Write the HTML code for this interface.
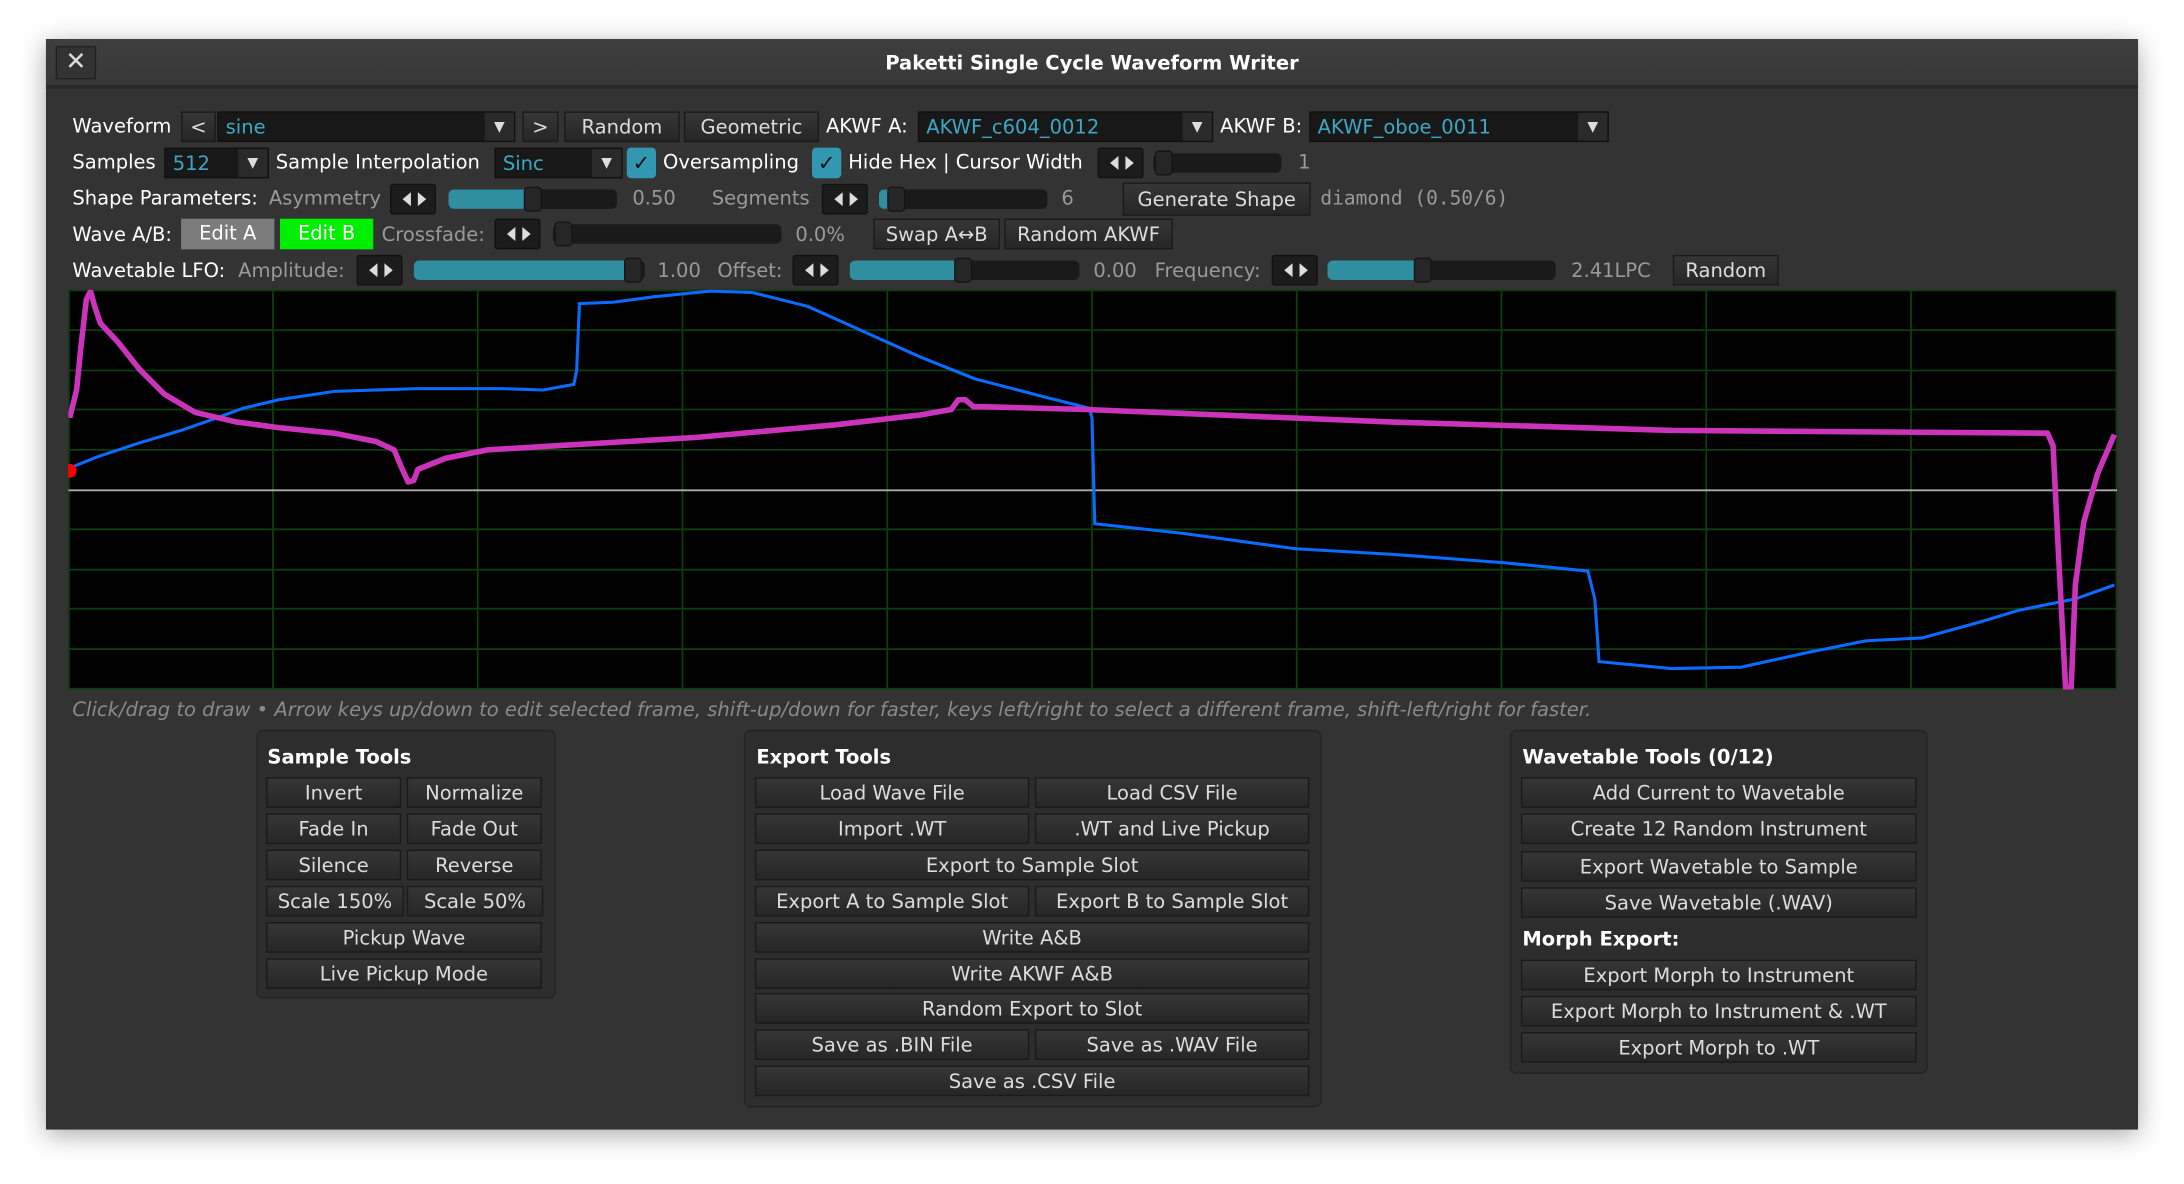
<!DOCTYPE html>
<html><head><meta charset="utf-8">
<style>
html,body{margin:0;padding:0;width:2184px;height:1184px;overflow:hidden;background:#fff;}
#s{position:absolute;left:0;top:0;width:1568px;height:850px;transform:scale(1.392857);transform-origin:0 0;font-family:"DejaVu Sans","Liberation Sans",sans-serif;font-size:14px;color:#e6e6e6;}
.a{position:absolute;white-space:nowrap;margin-top:1px;}
#win{position:absolute;left:33px;top:28px;width:1502px;height:783px;background:#333;box-shadow:0 4px 18px rgba(0,0,0,.35);}
#tb{position:absolute;left:0;top:0;width:1502px;height:33px;background:linear-gradient(#3e3e3e,#383838);border-bottom:3px solid #2a2a2a;}
.b{position:absolute;line-height:22px;text-align:center;background:linear-gradient(#363636,#262626);border:1px solid #1a1a1a;color:#dcdcdc;box-sizing:border-box;height:22px;}
.dd{position:absolute;height:22px;line-height:22px;background:#181818;border:1px solid #111;box-sizing:border-box;color:#3ba9c6;padding-left:5px;}
.dd i{position:absolute;right:0;top:0;width:21px;height:20px;background:#2a2a2a;color:#ddd;font-style:normal;font-size:10px;text-align:center;}
.ar{position:absolute;height:22px;width:33px;background:#1c1c1c;border:1px solid #111;box-sizing:border-box;border-radius:2px;}
.ar:before{content:"";position:absolute;left:8px;top:5px;border-right:6px solid #ddd;border-top:5px solid transparent;border-bottom:5px solid transparent;}
.ar:after{content:"";position:absolute;left:19px;top:5px;border-left:6px solid #ddd;border-top:5px solid transparent;border-bottom:5px solid transparent;}
.sl{position:absolute;height:14px;background:#1a1a1a;border-radius:4px;overflow:hidden;}
.sl b{position:absolute;left:0;top:0;height:14px;background:#2f8ea0;}
.th{position:absolute;width:13px;height:18px;background:#262626;border:1px solid #151515;border-radius:3px;box-sizing:border-box;}
.g{color:#9a9a9a;}
.cb{position:absolute;width:21px;height:22px;background:#3297b1;border-radius:3px;color:#111;text-align:center;line-height:22px;font-size:15px;font-weight:bold;}
.pn{position:absolute;background:#2d2d2d;border:1px solid #232323;border-radius:5px;box-sizing:border-box;}
.h{position:absolute;font-weight:bold;color:#fff;margin-top:1px;}
</style></head><body>
<div id="s">
<div id="win">
 <div id="tb">
  <div class="a" style="left:7px;top:4px;width:27px;height:22px;border:1px solid #222;background:#333;text-align:center;line-height:22px;font-size:18px;color:#ddd;">✕</div>
  <div class="a" style="left:0;width:1502px;top:9px;text-align:center;font-weight:bold;color:#fff;font-size:14px;">Paketti Single Cycle Waveform Writer</div>
 </div>
</div>

<!-- Row1 -->
<div class="a" style="left:52px;top:82px;color:#fff">Waveform</div>
<div class="b" style="left:130px;top:80px;width:25px;">&lt;</div>
<div class="dd" style="left:156px;top:80px;width:214px;">sine<i>▼</i></div>
<div class="b" style="left:375px;top:80px;width:26px;">&gt;</div>
<div class="b" style="left:405px;top:80px;width:83px;">Random</div>
<div class="b" style="left:491px;top:80px;width:97px;">Geometric</div>
<div class="a" style="left:593px;top:82px;color:#fff">AKWF A:</div>
<div class="dd" style="left:659px;top:80px;width:212px;">AKWF_c604_0012<i>▼</i></div>
<div class="a" style="left:876px;top:82px;color:#fff">AKWF B:</div>
<div class="dd" style="left:940px;top:80px;width:215px;">AKWF_oboe_0011<i>▼</i></div>
<!-- Row2 -->
<div class="a" style="left:52px;top:108px;color:#fff">Samples</div>
<div class="dd" style="left:118px;top:106px;width:75px;">512<i>▼</i></div>
<div class="a" style="left:198px;top:108px;color:#fff">Sample Interpolation</div>
<div class="dd" style="left:355px;top:106px;width:92px;">Sinc<i>▼</i></div>
<div class="cb" style="left:450px;top:106px;">✓</div>
<div class="a" style="left:476px;top:108px;color:#fff">Oversampling</div>
<div class="cb" style="left:583px;top:106px;">✓</div>
<div class="a" style="left:609px;top:108px;color:#fff">Hide Hex | Cursor Width</div>
<div class="ar" style="left:788px;top:106px;"></div>
<div class="sl" style="left:828px;top:110px;width:92px;"></div><div class="th" style="left:829px;top:108px;"></div>
<div class="a g" style="left:932px;top:108px;">1</div>
<!-- Row3 -->
<div class="a" style="left:52px;top:134px;color:#fff">Shape Parameters:</div>
<div class="a g" style="left:193px;top:134px;">Asymmetry</div>
<div class="ar" style="left:280px;top:132px;"></div>
<div class="sl" style="left:322px;top:136px;width:121px;"><b style="width:62px"></b></div><div class="th" style="left:376px;top:134px;"></div>
<div class="a g" style="left:454px;top:134px;">0.50</div>
<div class="a g" style="left:511px;top:134px;">Segments</div>
<div class="ar" style="left:590px;top:132px;"></div>
<div class="sl" style="left:631px;top:136px;width:121px;"><b style="width:8px"></b></div><div class="th" style="left:637px;top:134px;"></div>
<div class="a g" style="left:762px;top:134px;">6</div>
<div class="b" style="left:806px;top:131px;width:135px;height:24px;line-height:24px;">Generate Shape</div>
<div class="a g" style="left:948px;top:134px;font-family:'DejaVu Sans Mono','Liberation Mono',monospace;font-size:14px;">diamond (0.50/6)</div>
<!-- Row4 -->
<div class="a" style="left:52px;top:160px;color:#fff">Wave A/B:</div>
<div class="a" style="left:130px;top:157px;width:67px;height:22px;line-height:22px;background:#7c7c7c;text-align:center;color:#fff;margin-top:0;">Edit A</div>
<div class="a" style="left:201px;top:157px;width:67px;height:22px;line-height:22px;background:#00ee00;text-align:center;color:#fff;margin-top:0;">Edit B</div>
<div class="a g" style="left:274px;top:160px;">Crossfade:</div>
<div class="ar" style="left:355px;top:157px;"></div>
<div class="sl" style="left:397px;top:161px;width:164px;"></div><div class="th" style="left:398px;top:159px;"></div>
<div class="a g" style="left:571px;top:160px;">0.0%</div>
<div class="b" style="left:627px;top:157px;width:91px;">Swap A↔B</div>
<div class="b" style="left:721px;top:157px;width:121px;">Random AKWF</div>
<!-- Row5 -->
<div class="a" style="left:52px;top:186px;color:#fff">Wavetable LFO:</div>
<div class="a g" style="left:171px;top:186px;">Amplitude:</div>
<div class="ar" style="left:256px;top:183px;"></div>
<div class="sl" style="left:297px;top:187px;width:166px;"><b style="width:158px"></b></div><div class="th" style="left:448px;top:185px;"></div>
<div class="a g" style="left:472px;top:186px;">1.00</div>
<div class="a g" style="left:515px;top:186px;">Offset:</div>
<div class="ar" style="left:569px;top:183px;"></div>
<div class="sl" style="left:610px;top:187px;width:165px;"><b style="width:82px"></b></div><div class="th" style="left:685px;top:185px;"></div>
<div class="a g" style="left:785px;top:186px;">0.00</div>
<div class="a g" style="left:829px;top:186px;">Frequency:</div>
<div class="ar" style="left:913px;top:183px;"></div>
<div class="sl" style="left:953px;top:187px;width:164px;"><b style="width:68px"></b></div><div class="th" style="left:1015px;top:185px;"></div>
<div class="a g" style="left:1128px;top:186px;">2.41LPC</div>
<div class="b" style="left:1201px;top:183px;width:76px;">Random</div>

<!-- Plot -->
<svg class="a" style="left:49px;top:208px;margin-top:0" width="1471" height="287" viewBox="49 208 1471 287">
<rect x="49" y="208" width="1471" height="287" fill="#000"/>
<g stroke="#0c3d0c" stroke-width="1.3">
<line x1="196" y1="208" x2="196" y2="495"/><line x1="343" y1="208" x2="343" y2="495"/><line x1="490" y1="208" x2="490" y2="495"/><line x1="637" y1="208" x2="637" y2="495"/><line x1="784" y1="208" x2="784" y2="495"/><line x1="931" y1="208" x2="931" y2="495"/><line x1="1078" y1="208" x2="1078" y2="495"/><line x1="1225" y1="208" x2="1225" y2="495"/><line x1="1372" y1="208" x2="1372" y2="495"/>
<line x1="49" y1="237" x2="1520" y2="237"/><line x1="49" y1="266" x2="1520" y2="266"/><line x1="49" y1="294" x2="1520" y2="294"/><line x1="49" y1="323" x2="1520" y2="323"/><line x1="49" y1="380" x2="1520" y2="380"/><line x1="49" y1="409" x2="1520" y2="409"/><line x1="49" y1="437" x2="1520" y2="437"/><line x1="49" y1="466" x2="1520" y2="466"/>
<rect x="49.5" y="208.5" width="1470" height="286" fill="none"/>
</g>
<line x1="49" y1="352" x2="1520" y2="352" stroke="#aaa" stroke-width="1.3"/>
<polyline fill="none" stroke="#0a6cff" stroke-width="2.2" points="50,336 70,328 100,318 130,309 150,302 175,293 200,287 240,281 300,279 360,279 390,280 412,276 414,266 416,218 440,217 470,213 510,209 540,210 580,220 620,238 660,256 700,272 750,285 782,293 784,300 786,376 850,383 930,394 1000,398 1080,404 1140,410 1145,430 1148,475 1200,480 1250,479 1300,468 1340,460 1380,458 1420,447 1450,438 1490,430 1518,420"/>
<polyline fill="none" stroke="#cc33bb" stroke-width="4" stroke-linejoin="round" points="50,300 55,280 58,250 62,215 65,209 68,220 72,232 85,246 100,265 118,283 140,296 170,303 200,307 240,311 270,317 283,323 288,335 293,346 297,345 300,337 320,329 350,323 400,320 500,314 600,305 660,298 683,294 688,287 693,287 699,292 705,292 780,294 1000,303 1200,309 1470,311 1474,320 1478,400 1483,494 1487,494 1490,420 1496,375 1506,340 1518,312"/>
<circle cx="50" cy="338" r="5" fill="#f00"/>
</svg>

<div class="a" style="left:52px;top:501px;color:#8a8a8a;font-style:italic;">Click/drag to draw • Arrow keys up/down to edit selected frame, shift-up/down for faster, keys left/right to select a different frame, shift-left/right for faster.</div>

<!-- Sample Tools -->
<div class="pn" style="left:184px;top:524px;width:215px;height:193px;"></div>
<div class="h" style="left:192px;top:535px;">Sample Tools</div>
<div class="b" style="left:191px;top:558px;width:97px;">Invert</div><div class="b" style="left:292px;top:558px;width:97px;">Normalize</div>
<div class="b" style="left:191px;top:584px;width:97px;">Fade In</div><div class="b" style="left:292px;top:584px;width:97px;">Fade Out</div>
<div class="b" style="left:191px;top:610px;width:97px;">Silence</div><div class="b" style="left:292px;top:610px;width:97px;">Reverse</div>
<div class="b" style="left:191px;top:636px;width:99px;">Scale 150%</div><div class="b" style="left:292px;top:636px;width:98px;">Scale 50%</div>
<div class="b" style="left:191px;top:662px;width:198px;">Pickup Wave</div>
<div class="b" style="left:191px;top:688px;width:198px;">Live Pickup Mode</div>

<!-- Export Tools -->
<div class="pn" style="left:534px;top:524px;width:415px;height:271px;"></div>
<div class="h" style="left:543px;top:535px;">Export Tools</div>
<div class="b" style="left:542px;top:558px;width:197px;">Load Wave File</div><div class="b" style="left:743px;top:558px;width:197px;">Load CSV File</div>
<div class="b" style="left:542px;top:584px;width:197px;">Import .WT</div><div class="b" style="left:743px;top:584px;width:197px;">.WT and Live Pickup</div>
<div class="b" style="left:542px;top:610px;width:398px;">Export to Sample Slot</div>
<div class="b" style="left:542px;top:636px;width:197px;">Export A to Sample Slot</div><div class="b" style="left:743px;top:636px;width:197px;">Export B to Sample Slot</div>
<div class="b" style="left:542px;top:662px;width:398px;">Write A&amp;B</div>
<div class="b" style="left:542px;top:688px;width:398px;">Write AKWF A&amp;B</div>
<div class="b" style="left:542px;top:713px;width:398px;">Random Export to Slot</div>
<div class="b" style="left:542px;top:739px;width:197px;">Save as .BIN File</div><div class="b" style="left:743px;top:739px;width:197px;">Save as .WAV File</div>
<div class="b" style="left:542px;top:765px;width:398px;">Save as .CSV File</div>

<!-- Wavetable Tools -->
<div class="pn" style="left:1084px;top:524px;width:300px;height:247px;"></div>
<div class="h" style="left:1093px;top:535px;">Wavetable Tools (0/12)</div>
<div class="b" style="left:1092px;top:558px;width:284px;">Add Current to Wavetable</div>
<div class="b" style="left:1092px;top:584px;width:284px;">Create 12 Random Instrument</div>
<div class="b" style="left:1092px;top:611px;width:284px;">Export Wavetable to Sample</div>
<div class="b" style="left:1092px;top:637px;width:284px;">Save Wavetable (.WAV)</div>
<div class="h" style="left:1093px;top:666px;">Morph Export:</div>
<div class="b" style="left:1092px;top:689px;width:284px;">Export Morph to Instrument</div>
<div class="b" style="left:1092px;top:715px;width:284px;">Export Morph to Instrument &amp; .WT</div>
<div class="b" style="left:1092px;top:741px;width:284px;">Export Morph to .WT</div>
</div>
</body></html>
